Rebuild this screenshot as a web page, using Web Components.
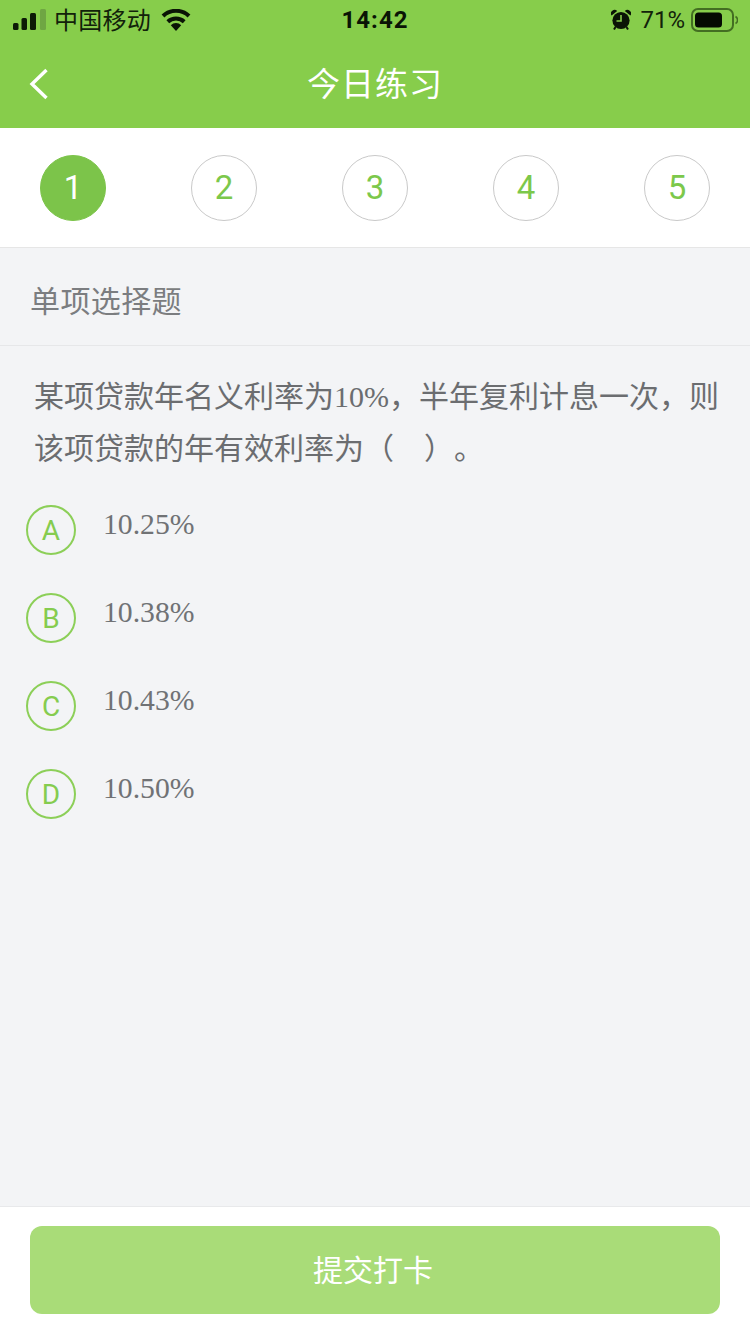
<!DOCTYPE html>
<html lang="zh-CN"><head><meta charset="utf-8"><title>今日练习</title>
<style>
html,body{margin:0;padding:0;background:#f3f4f6}
body{font-family:"Noto Sans CJK SC","Liberation Sans",sans-serif}
i{font:400 30px "Liberation Serif",serif}
</style></head><body>
<quiz-app>
  <app-header title-text="今日练习"></app-header>
  <step-bar count="5" active="1"></step-bar>
  <section-title>单项选择题</section-title>
  <quiz-question><span class="q">某项贷款年名义利率为<i>10%</i>，半年复利计息一次，则<br>该项贷款的年有效利率为（　）。</span></quiz-question>
  <quiz-option letter="A">10.25%</quiz-option>
  <quiz-option letter="B">10.38%</quiz-option>
  <quiz-option letter="C">10.43%</quiz-option>
  <quiz-option letter="D">10.50%</quiz-option>
  <submit-bar slot="footer">提交打卡</submit-bar>
</quiz-app>
<script>
function def(name, css, html){
  customElements.define(name, class extends HTMLElement{
    constructor(){super();this.attachShadow({mode:'open'});}
    connectedCallback(){
      this.shadowRoot.innerHTML='<style>'+css+'</style>'+(typeof html==='function'?html(this):html);
    }
  });
}
const CJK='"Noto Sans CJK SC","Liberation Sans",sans-serif';
def('quiz-app',`:host{display:flex;flex-direction:column;width:750px;height:1334px;background:#f3f4f6;overflow:hidden}
.grow{flex:1;display:flex;flex-direction:column;min-height:0}`,
`<div class="grow"><slot></slot></div><slot name="footer"></slot>`);

def('app-header',`:host{display:block;background:#87cd4b;height:128px;box-sizing:border-box}
.status{height:40px;display:flex;align-items:center;padding:0 12px 0 13px;color:#0c1a06;position:relative}
.left,.right{display:flex;align-items:center}
.left{flex:1}.right{flex:1;justify-content:flex-end}
.carrier{font:400 24px/40px ${CJK};margin:-2px 0 0 8px;color:#12220a;letter-spacing:.25px}
.wifi{margin-left:10px}
.time{font:700 24px/40px Roboto,"Liberation Sans",sans-serif;letter-spacing:1px;color:#0a1405;width:90px;text-align:center;margin-left:-1px}
.pct{font:400 24px/40px Roboto,"Liberation Sans",sans-serif;margin:0 6px 0 9px;color:#12220a}
.nav{height:88px;display:flex;align-items:center;position:relative;justify-content:center}
.back{position:absolute;left:29px;top:28px;display:block}
h1{margin:0 0 4px 0;font:400 33px/1 ${CJK};color:#fff;letter-spacing:1px}`,
el=>`<div class="status">
<div class="left">
<svg width="33" height="22" viewBox="0 0 33 22"><rect x="0" y="14" width="5.500" height="7" rx="1.500" fill="#0c1a06"/><rect x="8.500" y="9" width="5.500" height="12" rx="1.500" fill="#0c1a06"/><rect x="17" y="4" width="6" height="17" rx="1.500" fill="#0c1a06"/><rect x="27" y="0" width="6" height="21" rx="1.500" fill="#6fa643"/></svg>
<span class="carrier">中国移动</span>
<svg class="wifi" width="30" height="22" viewBox="0 0 30 22"><path d="M15 22l-5.200-5.800a7.400 7.400 0 0 1 10.400 0z" fill="#0a1405"/><path d="M6.800 12.800a12 12 0 0 1 16.400 0M2 7a18.800 18.800 0 0 1 26 0" fill="none" stroke="#0a1405" stroke-width="4"/></svg>
</div>
<span class="time">14:42</span>
<div class="right">
<svg width="20" height="22" viewBox="0 0 20 22"><circle cx="10" cy="11.500" r="8.600" fill="#0a1405"/><path d="M10 6v6H5.500" fill="none" stroke="#87cd4b" stroke-width="1.600"/><path d="M.6 6.500a3.600 3.600 0 0 1 5.600-4.500zM19.400 6.500a3.600 3.600 0 0 0-5.600-4.500z" fill="#0a1405"/><path d="M4.500 18l-1.500 2.500M15.500 18l1.500 2.500" stroke="#0a1405" stroke-width="2"/></svg>
<span class="pct">71%</span>
<svg width="47" height="24" viewBox="0 0 47 24"><rect x="1" y="1" width="41" height="22" rx="6" fill="none" stroke="#436e22" stroke-width="2"/><rect x="4" y="4.500" width="27" height="15" rx="3.500" fill="#050a02"/><path d="M44.500 8.500a4 4 0 0 1 0 7" fill="none" stroke="#436e22" stroke-width="1.600"/></svg>
</div>
</div>
<div class="nav">
<svg class="back" width="20" height="32" viewBox="0 0 20 32"><path d="M17.500 2L3 16l14.500 14" fill="none" stroke="#fff" stroke-width="3.400"/></svg>
<h1>${el.getAttribute('title-text')}</h1>
</div>`);

def('step-bar',`:host{display:flex;justify-content:space-between;align-items:center;height:120px;box-sizing:border-box;padding:0 40px 0 40px;background:#fff;border-bottom:1px solid #e6e6e6}
.s{box-sizing:border-box;width:66px;height:66px;border-radius:50%;border:1px solid #c9c9c9;display:flex;align-items:center;justify-content:center;color:#7cc84b;font:400 33px/1 Roboto,"Liberation Sans",sans-serif}
.s.on{background:#7cc44a;border-color:#7cc44a;color:#fff}`,
el=>{let o='';const n=+el.getAttribute('count'),a=+el.getAttribute('active');for(let i=1;i<=n;i++)o+=`<div class="s${i===a?' on':''}">${i}</div>`;return o;});

def('section-title',`:host{display:flex;align-items:center;height:98px;box-sizing:border-box;padding:4px 30px 0;border-bottom:1px solid #e6e7e9;color:#7b7d80;font:400 30px/1 ${CJK};letter-spacing:.4px}`,`<slot></slot>`);

def('quiz-question',`:host{display:block;padding:22px 0 0 34px;height:159px;box-sizing:border-box;color:#6b6d70;font:400 30px/52px ${CJK};text-spacing-trim:space-all}
::slotted(.q){display:block}`,`<slot></slot>`);

def('quiz-option',`:host{display:flex;height:88px;padding-left:26px;box-sizing:border-box;align-items:flex-start}
.c{box-sizing:border-box;width:50px;height:50px;border-radius:50%;border:2px solid #8ccf58;color:#85cc4f;display:flex;align-items:center;justify-content:center;padding-top:2px;font:400 28px/1 Roboto,"Liberation Sans",sans-serif;flex:none}
.t{margin:-1px 0 0 27px;color:#707275;font:400 29.7px/40px "Liberation Serif",serif}`,
el=>`<div class="c">${el.getAttribute('letter')}</div><div class="t"><slot></slot></div>`);

def('submit-bar',`:host{display:block;height:128px;box-sizing:border-box;background:#fff;border-top:1px solid #e8e9eb;padding:19px 30px 0}
button{display:flex;align-items:center;justify-content:center;width:690px;height:88px;border:0;border-radius:12px;background:#a9dc78;color:#fff;font:400 30px/1 ${CJK};padding:0 4px 4px 0}`,
`<button><slot></slot></button>`);
</script>
</body></html>
